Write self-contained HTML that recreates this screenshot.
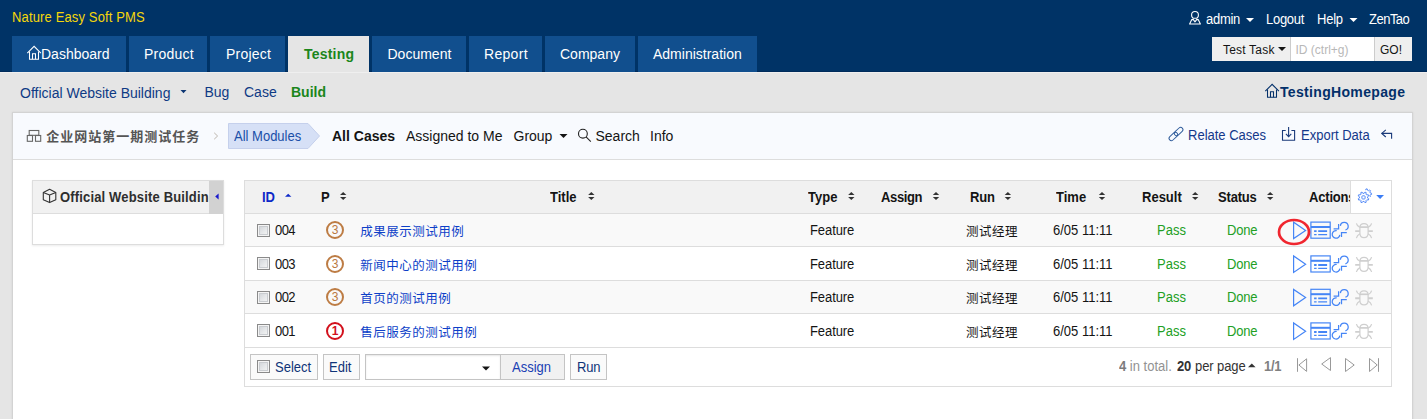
<!DOCTYPE html>
<html lang="en">
<head>
<meta charset="utf-8">
<title>Testing - Nature Easy Soft PMS</title>
<style>
*{box-sizing:border-box;margin:0;padding:0}
html,body{width:1427px;height:419px;overflow:hidden}
body{background:#e5e5e5;font-family:"Liberation Sans","Noto Sans CJK SC",sans-serif;font-size:13px;color:#141414;position:relative}
.a{position:absolute;white-space:nowrap}
.t{position:absolute;white-space:nowrap;line-height:16px;color:#141414}
.n{font-size:14px;transform:scaleX(.929);transform-origin:0 50%}
.m{font-size:14px}
.s{font-size:12px}
.b{font-weight:bold}
#header{position:absolute;left:0;top:0;width:1427px;height:72px;background:#003366}
.tab{position:absolute;top:36px;height:36px;background:#114f8e}
.tab.active{background:#e5e5e5}
#panel{position:absolute;left:12px;top:112px;width:1401px;height:320px;background:#fff;border:1px solid #d3d3d3;box-shadow:0 0 2px rgba(0,0,0,.08)}
#fbar{position:absolute;left:13px;top:113px;width:1399px;height:47px;background:#f8fafe;border-bottom:1px solid #ddd}
#side{position:absolute;left:32px;top:180px;width:192px;height:65px;background:#fff;border:1px solid #ddd;box-shadow:0 1px 2px rgba(0,0,0,.08)}
#sidehead{position:absolute;left:33px;top:181px;width:190px;height:33px;background:#f1f1f1;border-bottom:1px solid #ddd}
#tbl{position:absolute;left:244px;top:180px;width:1148px;height:207px;border:1px solid #ddd;background:#fff}
.rw{position:absolute;left:245px;width:1146px;border-bottom:1px solid #ddd}
.z{font-family:"Liberation Sans","Noto Sans CJK SC",sans-serif}
.cb{position:absolute;width:13px;height:13px;border:1px solid #8a8a8a;background:linear-gradient(135deg,#d3d6da 15%,#e6e8ea 55%,#f4f4f4 90%);box-shadow:inset 0 0 0 1px #f4f4f4,inset 0 0 0 2px #c9ccd0}
.pri{position:absolute;width:18px;height:18px;border-radius:50%;border:2px solid #bd7c44;color:#b9783f;font-size:12px;line-height:15.5px;text-align:center}
.pri.p1{border-color:#d2101c;color:#d2101c;font-weight:bold}
.btn{position:absolute;top:354px;height:26px;border:1px solid #c4c4c4;background:#fafafa;white-space:nowrap}
svg{position:absolute;left:0;top:0;overflow:visible;pointer-events:none}
</style>
</head>
<body>
<div id="header"></div><div class="a" style="left:0;top:71px;width:1427px;height:1px;background:#002b5b"></div><div class="a" style="left:0;top:72px;width:1427px;height:1px;background:#efefef"></div>
<div class="t n" id="t_company" style="left:12px;top:9px;color:#f5d60a;letter-spacing:0.15px;">Nature Easy Soft PMS</div>
<div class="tab" style="left:12px;width:114px"></div>
<div class="t m" id="t_Dashboard" style="left:41px;top:46px;color:#fff;">Dashboard</div>
<div class="tab" style="left:129px;width:78px"></div>
<div class="t m" id="t_Product" style="left:144px;top:46px;color:#fff;letter-spacing:0.25px;">Product</div>
<div class="tab" style="left:210px;width:75px"></div>
<div class="t m" id="t_Project" style="left:226px;top:46px;color:#fff;letter-spacing:0.2px;">Project</div>
<div class="tab active" style="left:288px;width:81px"></div>
<div class="t m b" id="t_Testing" style="left:304px;top:46px;color:#1b861b;letter-spacing:0.2px;">Testing</div>
<div class="tab" style="left:372px;width:94px"></div>
<div class="t m" id="t_Document" style="left:387.5px;top:46px;color:#fff;">Document</div>
<div class="tab" style="left:469px;width:73px"></div>
<div class="t m" id="t_Report" style="left:484px;top:46px;color:#fff;letter-spacing:0.3px;">Report</div>
<div class="tab" style="left:545px;width:90px"></div>
<div class="t m" id="t_Company" style="left:560px;top:46px;color:#fff;">Company</div>
<div class="tab" style="left:638px;width:119px"></div>
<div class="t m" id="t_Administration" style="left:653px;top:46px;color:#fff;">Administration</div>
<div class="t n" id="t_admin" style="left:1205.5px;top:11px;color:#fff;letter-spacing:-0.3px;">admin</div>
<div class="t n" id="t_Logout" style="left:1266px;top:11px;color:#fff;letter-spacing:-0.3px;">Logout</div>
<div class="t n" id="t_Help" style="left:1317px;top:11px;color:#fff;letter-spacing:-0.25px;">Help</div>
<div class="t n" id="t_ZenTao" style="left:1369px;top:11px;color:#fff;letter-spacing:-0.55px;">ZenTao</div>
<div class="a" style="left:1212px;top:37px;width:200px;height:24px;background:#fff"></div>
<div class="a" style="left:1212px;top:37px;width:79px;height:24px;background:#efefef;border-right:1px solid #ccc"></div>
<div class="a" style="left:1374px;top:37px;width:38px;height:24px;background:#efefef;border-left:1px solid #ccc"></div>
<div class="t s" id="t_TestTask" style="left:1223px;top:42px;letter-spacing:0.2px;">Test Task</div>
<div class="t s" id="t_idctrl" style="left:1295.5px;top:42px;color:#b8b8b8;">ID (ctrl+g)</div>
<div class="t s" id="t_GO" style="left:1380px;top:42px;">GO!</div>
<div class="t m" id="t_owb" style="left:20px;top:85px;color:#0e3a84;">Official Website Building</div>
<div class="t m" id="t_Bug" style="left:204.5px;top:84px;color:#0e3a84;">Bug</div>
<div class="t m" id="t_Case" style="left:244px;top:84px;color:#0e3a84;">Case</div>
<div class="t m b" id="t_Build" style="left:291px;top:84px;color:#1b861b;">Build</div>
<div class="t m b" id="t_TH" style="left:1280px;top:84px;color:#03306a;letter-spacing:0.33px;">TestingHomepage</div>
<div id="panel"></div><div id="fbar"></div>
<svg width="1427" height="419" viewBox="0 0 1427 419"><polygon points="228.5,123.5 308,123.5 319.5,136 308,148.5 228.5,148.5" fill="#d6e0f6" stroke="#c5d0ec" stroke-width="1"/></svg>
<div class="t z b z" id="t_task" style="left:46.3px;top:129px;color:#555;letter-spacing:1px;font-size:13px;">企业网站第一期测试任务</div>
<div class="t n" id="t_AllModules" style="left:234px;top:128px;color:#1a4fa8;">All Modules</div>
<div class="t m b" id="t_AllCases" style="left:332px;top:128px;">All Cases</div>
<div class="t m" id="t_Assigned" style="left:406px;top:128px;">Assigned to Me</div>
<div class="t m" id="t_Group" style="left:513.5px;top:128px;">Group</div>
<div class="t m" id="t_Search" style="left:595.5px;top:128px;">Search</div>
<div class="t m" id="t_Info" style="left:650px;top:128px;">Info</div>
<div class="t n" id="t_Relate" style="left:1188.4px;top:127px;color:#14388a;">Relate Cases</div>
<div class="t n" id="t_Export" style="left:1300.5px;top:127px;color:#14388a;">Export Data</div>
<div id="side"></div><div id="sidehead"></div>
<div class="t n b" id="t_sideT" style="left:60px;top:189px;color:#2e2e2e;letter-spacing:0.17px;width:160px;overflow:hidden;">Official Website Building</div>
<div class="a" style="left:209px;top:181px;width:14px;height:33px;background:#d2d2d2"></div>
<div id="tbl"></div>
<div class="rw" style="top:181px;height:33px;background:#f1f1f1"></div>
<div class="t n b" id="h_ID" style="left:261.5px;top:189px;color:#0d28c8;">ID</div>
<div class="t n b" id="h_P" style="left:320.5px;top:189px;">P</div>
<div class="t n b" id="h_Title" style="left:549.5px;top:189px;">Title</div>
<div class="t n b" id="h_Type" style="left:808px;top:189px;">Type</div>
<div class="t n b" id="h_Assign" style="left:881px;top:189px;letter-spacing:-0.4px;">Assign</div>
<div class="t n b" id="h_Run" style="left:969.5px;top:189px;letter-spacing:-0.2px;">Run</div>
<div class="t n b" id="h_Time" style="left:1056.3px;top:189px;">Time</div>
<div class="t n b" id="h_Result" style="left:1142.4px;top:189px;">Result</div>
<div class="t n b" id="h_Status" style="left:1218.4px;top:189px;letter-spacing:-0.2px;">Status</div>
<div class="t n b" id="h_Actions" style="left:1309px;top:189px;letter-spacing:-0.2px;">Actions</div>
<div class="a" style="left:1350px;top:181px;width:41px;height:32px;background:#fff;border-left:1px solid #ddd"></div>
<div class="rw" style="top:214px;height:33px;background:#f9f9f9;"></div>
<div class="cb" style="left:257px;top:224px"></div>
<div class="t n" id="r0_id" style="left:274.5px;top:222px;letter-spacing:-0.6px;">004</div>
<div class="pri" style="left:326px;top:221px">3</div>
<div class="t z z" id="r0_t" style="left:360.3px;top:224px;color:#0d3fc8;letter-spacing:0.5px;font-size:12.5px;">成果展示测试用例</div>
<div class="t n" id="r0_f" style="left:810px;top:222px;letter-spacing:-0.1px;">Feature</div>
<div class="t z z" id="r0_r" style="left:966px;top:224px;letter-spacing:0.5px;font-size:12.5px;">测试经理</div>
<div class="t n" id="r0_tm" style="left:1053px;top:222px;">6/05 11:11</div>
<div class="t n" id="r0_p" style="left:1157px;top:222px;color:#229f24;">Pass</div>
<div class="t n" id="r0_d" style="left:1227px;top:222px;color:#229f24;letter-spacing:-0.2px;">Done</div>
<div class="rw" style="top:247px;height:34px;"></div>
<div class="cb" style="left:257px;top:257px"></div>
<div class="t n" id="r1_id" style="left:274.5px;top:256px;letter-spacing:-0.6px;">003</div>
<div class="pri" style="left:326px;top:255px">3</div>
<div class="t z z" id="r1_t" style="left:360.3px;top:258px;color:#0d3fc8;letter-spacing:0.5px;font-size:12.5px;">新闻中心的测试用例</div>
<div class="t n" id="r1_f" style="left:810px;top:256px;letter-spacing:-0.1px;">Feature</div>
<div class="t z z" id="r1_r" style="left:966px;top:258px;letter-spacing:0.5px;font-size:12.5px;">测试经理</div>
<div class="t n" id="r1_tm" style="left:1053px;top:256px;">6/05 11:11</div>
<div class="t n" id="r1_p" style="left:1157px;top:256px;color:#229f24;">Pass</div>
<div class="t n" id="r1_d" style="left:1227px;top:256px;color:#229f24;letter-spacing:-0.2px;">Done</div>
<div class="rw" style="top:281px;height:33px;background:#f9f9f9;"></div>
<div class="cb" style="left:257px;top:291px"></div>
<div class="t n" id="r2_id" style="left:274.5px;top:289px;letter-spacing:-0.6px;">002</div>
<div class="pri" style="left:326px;top:288px">3</div>
<div class="t z z" id="r2_t" style="left:360.3px;top:291px;color:#0d3fc8;letter-spacing:0.5px;font-size:12.5px;">首页的测试用例</div>
<div class="t n" id="r2_f" style="left:810px;top:289px;letter-spacing:-0.1px;">Feature</div>
<div class="t z z" id="r2_r" style="left:966px;top:291px;letter-spacing:0.5px;font-size:12.5px;">测试经理</div>
<div class="t n" id="r2_tm" style="left:1053px;top:289px;">6/05 11:11</div>
<div class="t n" id="r2_p" style="left:1157px;top:289px;color:#229f24;">Pass</div>
<div class="t n" id="r2_d" style="left:1227px;top:289px;color:#229f24;letter-spacing:-0.2px;">Done</div>
<div class="rw" style="top:314px;height:34px;"></div>
<div class="cb" style="left:257px;top:324px"></div>
<div class="t n" id="r3_id" style="left:274.5px;top:323px;letter-spacing:-0.6px;">001</div>
<div class="pri p1" style="left:326px;top:322px">1</div>
<div class="t z z" id="r3_t" style="left:360.3px;top:325px;color:#0d3fc8;letter-spacing:0.5px;font-size:12.5px;">售后服务的测试用例</div>
<div class="t n" id="r3_f" style="left:810px;top:323px;letter-spacing:-0.1px;">Feature</div>
<div class="t z z" id="r3_r" style="left:966px;top:325px;letter-spacing:0.5px;font-size:12.5px;">测试经理</div>
<div class="t n" id="r3_tm" style="left:1053px;top:323px;">6/05 11:11</div>
<div class="t n" id="r3_p" style="left:1157px;top:323px;color:#229f24;">Pass</div>
<div class="t n" id="r3_d" style="left:1227px;top:323px;color:#229f24;letter-spacing:-0.2px;">Done</div>
<div class="btn" style="left:250px;width:68px"></div>
<div class="cb" style="left:257px;top:360px"></div>
<div class="t n" id="t_Select" style="left:274.5px;top:359px;color:#0f3478;">Select</div>
<div class="btn" style="left:323px;width:37px"></div>
<div class="t n" id="t_Edit" style="left:329px;top:359px;color:#0f3478;">Edit</div>
<div class="btn" style="left:365px;width:136px;background:#fff;box-shadow:inset 0 1px 2px rgba(0,0,0,.1)"></div>
<div class="btn" style="left:500px;width:65px;background:#f1f1f1"></div>
<div class="t n" id="t_Assign" style="left:512.4px;top:359px;color:#1a3fb4;">Assign</div>
<div class="btn" style="left:570px;width:37px"></div>
<div class="t n" id="t_Run" style="left:577px;top:359px;color:#0f3478;letter-spacing:-0.15px;">Run</div>
<div class="t n" id="t_total" style="left:1119px;top:358px;color:#929292;"><b style="color:#7c7c7c">4</b> in total.</div>
<div class="t n b" id="t_20" style="left:1177.4px;top:358px;color:#333;letter-spacing:-0.2px;">20</div>
<div class="t n" id="t_pp" style="left:1195.3px;top:358px;color:#333;letter-spacing:-0.1px;">per page</div>
<div class="t n b" id="t_11" style="left:1264.4px;top:358px;color:#808080;letter-spacing:-0.3px;">1/1</div>
<svg width="1427" height="419" viewBox="0 0 1427 419" fill="none" stroke-linecap="butt" stroke-linejoin="miter">
<g stroke="#fff" stroke-width="1.1"><circle cx="1195" cy="14.9" r="3.4"/><path d="M1189.6 24 L1191.8 19.6 L1193.2 19.4 L1195 21.8 L1196.8 19.4 L1198.2 19.6 L1200.4 24 Z" stroke-linejoin="round"/></g>
<polygon points="1246,18 1254,18 1250,22" fill="#fff" stroke="none"/>
<polygon points="1349.5,18 1357.5,18 1353.5,22" fill="#fff" stroke="none"/>
<polygon points="1278,47 1286,47 1282,51" fill="#141414" stroke="none"/>
<polygon points="180.5,90 186.5,90 183.5,93.3" fill="#0c3673" stroke="none"/>
<polygon points="559.5,134 567.5,134 563.5,138" fill="#141414" stroke="none"/>
<polygon points="482,366.5 490,366.5 486,370.5" fill="#141414" stroke="none"/>
<polygon points="1248,367.2 1255.6,367.2 1251.8,363.4" fill="#333" stroke="none"/>
<polygon points="1376.2,195 1384,195 1380.1,199" fill="#3b7df5" stroke="none"/>
<polygon points="218.6,193.4 218.6,199.6 215.2,196.5" fill="#1a1acd" stroke="none"/>
<g stroke="#fff" stroke-width="1.05" transform="translate(27,45.8)"><path d="M0.3 7.3 L7.1 0.5 L13.9 7.3"/><path d="M2.5 5.6 V13.5 H11.5 V5.6"/><path d="M5.5 13.5 V7.9 H8.5 V13.5"/></g>
<g stroke="#03306a" stroke-width="1.05" transform="translate(1265,83.8)"><path d="M0.3 7.3 L7.1 0.5 L13.9 7.3"/><path d="M2.5 5.6 V13.5 H11.5 V5.6"/><path d="M5.5 13.5 V7.9 H8.5 V13.5"/></g>
<g stroke="#666" stroke-width="1.1"><rect x="29.2" y="130.5" width="9.6" height="4.8"/><rect x="27.3" y="135.5" width="5.2" height="5.8"/><rect x="35.5" y="135.5" width="5.2" height="5.8"/></g>
<polyline points="214.2,132.8 217.6,136 214.2,139.2" stroke="#bdb6ae" stroke-width="1"/>
<g stroke="#222" stroke-width="1.1"><circle cx="582.9" cy="133.7" r="4.4"/><path d="M586.1 136.9 L590.8 141.6"/></g>
<g stroke="#2d5a9a" stroke-width="0.95" transform="translate(1176,134) rotate(-43)"><rect x="-8.6" y="-2.3" width="10" height="4.6" rx="2.3"/><rect x="-1.4" y="-2.3" width="10" height="4.6" rx="2.3"/></g>
<g stroke="#1a3a7a" stroke-width="1.1"><path d="M1285.7 130.5 H1282.5 V140.2 H1294.6 V130.5 H1291.4"/><path d="M1288.6 127 V136.6"/><path d="M1285.9 133.9 L1288.6 136.6 L1291.3 133.9"/></g>
<g stroke="#1a3a7a" stroke-width="1.1"><path d="M1381.6 133.4 H1391.6 V138.8"/><path d="M1385.8 129.9 L1381.8 133.4 L1385.8 137"/></g>
<g stroke="#333" stroke-width="1.1" stroke-linejoin="round"><path d="M49.6 189.2 L55.8 192.4 V199.7 L49.6 202.6 L43.3 199.7 V192.4 Z"/><path d="M43.3 192.4 L49.6 194.9 L55.8 192.4 M49.6 194.9 V202.6"/></g>
<g stroke="#4d86f7" stroke-width="0.95" stroke-linejoin="round"><path d="M1367.55 198.04 L1368.81 198.85 L1368.28 200.13 L1366.82 199.81 L1365.91 200.72 L1366.23 202.18 L1364.95 202.71 L1364.14 201.45 L1362.86 201.45 L1362.05 202.71 L1360.77 202.18 L1361.09 200.72 L1360.18 199.81 L1358.72 200.13 L1358.19 198.85 L1359.45 198.04 L1359.45 196.76 L1358.19 195.95 L1358.72 194.67 L1360.18 194.99 L1361.09 194.08 L1360.77 192.62 L1362.05 192.09 L1362.86 193.35 L1364.14 193.35 L1364.95 192.09 L1366.23 192.62 L1365.91 194.08 L1366.82 194.99 L1368.28 194.67 L1368.81 195.95 L1367.55 196.76 Z"/><rect x="1361.9" y="195.8" width="3.2" height="3.2" rx="0.8"/>
<path d="M1365.71 190.20 L1365.97 188.94 L1367.23 188.94 L1367.49 190.20 L1368.59 190.66 L1369.66 189.95 L1370.55 190.84 L1369.84 191.91 L1370.30 193.01 L1371.56 193.27 L1371.56 194.53 L1370.30 194.79 L1369.84 195.89 L1370.55 196.96"/></g>
<polygon points="340.0,195 346.4,195 343.2,192" fill="#333" stroke="none"/>
<polygon points="340.0,197 346.4,197 343.2,200" fill="#333" stroke="none"/>
<polygon points="588.0999999999999,195 594.5,195 591.3,192" fill="#333" stroke="none"/>
<polygon points="588.0999999999999,197 594.5,197 591.3,200" fill="#333" stroke="none"/>
<polygon points="848.0999999999999,195 854.5,195 851.3,192" fill="#333" stroke="none"/>
<polygon points="848.0999999999999,197 854.5,197 851.3,200" fill="#333" stroke="none"/>
<polygon points="932.8,195 939.2,195 936,192" fill="#333" stroke="none"/>
<polygon points="932.8,197 939.2,197 936,200" fill="#333" stroke="none"/>
<polygon points="1004.6999999999999,195 1011.1,195 1007.9,192" fill="#333" stroke="none"/>
<polygon points="1004.6999999999999,197 1011.1,197 1007.9,200" fill="#333" stroke="none"/>
<polygon points="1098.8,195 1105.2,195 1102,192" fill="#333" stroke="none"/>
<polygon points="1098.8,197 1105.2,197 1102,200" fill="#333" stroke="none"/>
<polygon points="1192.0,195 1198.4,195 1195.2,192" fill="#333" stroke="none"/>
<polygon points="1192.0,197 1198.4,197 1195.2,200" fill="#333" stroke="none"/>
<polygon points="1267.0,195 1273.4,195 1270.2,192" fill="#333" stroke="none"/>
<polygon points="1267.0,197 1273.4,197 1270.2,200" fill="#333" stroke="none"/>
<polygon points="285,196.8 291.4,196.8 288.2,193.8" fill="#0d28c8" stroke="none"/>
<g stroke="#999" stroke-width="1"><path d="M1297.5 358.2 V371.8"/><path d="M1306.6 358.8 V371.4 L1298.9 365 Z"/><path d="M1330.5 357.6 V370.5 L1321.7 364 Z"/><path d="M1345.5 358.5 V371.5 L1354.2 365 Z"/><path d="M1369.5 358.5 V371.5 L1377.2 365 Z"/><path d="M1378.5 358.2 V371.8"/></g>
<g transform="translate(0,0.19999999999998863)"><path d="M1293.6 222 V238.4 L1305.6 230.2 Z" stroke="#4585f6" stroke-width="1.2"/><g stroke="#4585f6"><rect x="1310.9" y="221.9" width="19.3" height="16.1" stroke-width="1.2"/><path d="M1310.9 226.8 H1330.2" stroke-width="2"/><path d="M1314.1 231 H1316.6 M1318.2 231 H1327.1" stroke-width="1.8"/><path d="M1314.1 234.4 H1316.6 M1318.2 234.4 H1327.1" stroke-width="1.2"/></g><g stroke="#4585f6" stroke-width="1.25"><path d="M1340.4 225.7 A3.9 3.9 0 1 1 1345.4 229.8"/><path d="M1338.6 223.9 V228.6 H1333.6"/><path d="M1346.8 232.3 H1341.5 V236.8"/><path d="M1336.7 230.5 A3.8 3.8 0 1 0 1339.8 234.7"/></g><g stroke="#cfcfcf" stroke-width="1.2"><path d="M1359.9 227.4 Q1359.9 223.4 1364 223.4 Q1368.1 223.4 1368.1 227.4 V233 Q1368.1 237.4 1364 237.4 Q1359.9 237.4 1359.9 233 Z"/><path d="M1359.9 226.9 H1368.1" stroke-width="1.7"/><path d="M1355.2 230.9 H1359.9 M1368.1 230.9 H1372.8" stroke-width="1.9"/><path d="M1356.4 223.2 Q1357 226 1359.9 227.2 M1371.6 223.2 Q1371 226 1368.1 227.2 M1356.4 238 Q1357 235 1359.9 233.6 M1371.6 238 Q1371 235 1368.1 233.6"/></g></g>
<g transform="translate(0,34)"><path d="M1293.6 222 V238.4 L1305.6 230.2 Z" stroke="#4585f6" stroke-width="1.2"/><g stroke="#4585f6"><rect x="1310.9" y="221.9" width="19.3" height="16.1" stroke-width="1.2"/><path d="M1310.9 226.8 H1330.2" stroke-width="2"/><path d="M1314.1 231 H1316.6 M1318.2 231 H1327.1" stroke-width="1.8"/><path d="M1314.1 234.4 H1316.6 M1318.2 234.4 H1327.1" stroke-width="1.2"/></g><g stroke="#4585f6" stroke-width="1.25"><path d="M1340.4 225.7 A3.9 3.9 0 1 1 1345.4 229.8"/><path d="M1338.6 223.9 V228.6 H1333.6"/><path d="M1346.8 232.3 H1341.5 V236.8"/><path d="M1336.7 230.5 A3.8 3.8 0 1 0 1339.8 234.7"/></g><g stroke="#cfcfcf" stroke-width="1.2"><path d="M1359.9 227.4 Q1359.9 223.4 1364 223.4 Q1368.1 223.4 1368.1 227.4 V233 Q1368.1 237.4 1364 237.4 Q1359.9 237.4 1359.9 233 Z"/><path d="M1359.9 226.9 H1368.1" stroke-width="1.7"/><path d="M1355.2 230.9 H1359.9 M1368.1 230.9 H1372.8" stroke-width="1.9"/><path d="M1356.4 223.2 Q1357 226 1359.9 227.2 M1371.6 223.2 Q1371 226 1368.1 227.2 M1356.4 238 Q1357 235 1359.9 233.6 M1371.6 238 Q1371 235 1368.1 233.6"/></g></g>
<g transform="translate(0,67.39999999999998)"><path d="M1293.6 222 V238.4 L1305.6 230.2 Z" stroke="#4585f6" stroke-width="1.2"/><g stroke="#4585f6"><rect x="1310.9" y="221.9" width="19.3" height="16.1" stroke-width="1.2"/><path d="M1310.9 226.8 H1330.2" stroke-width="2"/><path d="M1314.1 231 H1316.6 M1318.2 231 H1327.1" stroke-width="1.8"/><path d="M1314.1 234.4 H1316.6 M1318.2 234.4 H1327.1" stroke-width="1.2"/></g><g stroke="#4585f6" stroke-width="1.25"><path d="M1340.4 225.7 A3.9 3.9 0 1 1 1345.4 229.8"/><path d="M1338.6 223.9 V228.6 H1333.6"/><path d="M1346.8 232.3 H1341.5 V236.8"/><path d="M1336.7 230.5 A3.8 3.8 0 1 0 1339.8 234.7"/></g><g stroke="#cfcfcf" stroke-width="1.2"><path d="M1359.9 227.4 Q1359.9 223.4 1364 223.4 Q1368.1 223.4 1368.1 227.4 V233 Q1368.1 237.4 1364 237.4 Q1359.9 237.4 1359.9 233 Z"/><path d="M1359.9 226.9 H1368.1" stroke-width="1.7"/><path d="M1355.2 230.9 H1359.9 M1368.1 230.9 H1372.8" stroke-width="1.9"/><path d="M1356.4 223.2 Q1357 226 1359.9 227.2 M1371.6 223.2 Q1371 226 1368.1 227.2 M1356.4 238 Q1357 235 1359.9 233.6 M1371.6 238 Q1371 235 1368.1 233.6"/></g></g>
<g transform="translate(0,101)"><path d="M1293.6 222 V238.4 L1305.6 230.2 Z" stroke="#4585f6" stroke-width="1.2"/><g stroke="#4585f6"><rect x="1310.9" y="221.9" width="19.3" height="16.1" stroke-width="1.2"/><path d="M1310.9 226.8 H1330.2" stroke-width="2"/><path d="M1314.1 231 H1316.6 M1318.2 231 H1327.1" stroke-width="1.8"/><path d="M1314.1 234.4 H1316.6 M1318.2 234.4 H1327.1" stroke-width="1.2"/></g><g stroke="#4585f6" stroke-width="1.25"><path d="M1340.4 225.7 A3.9 3.9 0 1 1 1345.4 229.8"/><path d="M1338.6 223.9 V228.6 H1333.6"/><path d="M1346.8 232.3 H1341.5 V236.8"/><path d="M1336.7 230.5 A3.8 3.8 0 1 0 1339.8 234.7"/></g><g stroke="#cfcfcf" stroke-width="1.2"><path d="M1359.9 227.4 Q1359.9 223.4 1364 223.4 Q1368.1 223.4 1368.1 227.4 V233 Q1368.1 237.4 1364 237.4 Q1359.9 237.4 1359.9 233 Z"/><path d="M1359.9 226.9 H1368.1" stroke-width="1.7"/><path d="M1355.2 230.9 H1359.9 M1368.1 230.9 H1372.8" stroke-width="1.9"/><path d="M1356.4 223.2 Q1357 226 1359.9 227.2 M1371.6 223.2 Q1371 226 1368.1 227.2 M1356.4 238 Q1357 235 1359.9 233.6 M1371.6 238 Q1371 235 1368.1 233.6"/></g></g>
<ellipse cx="1294" cy="232" rx="15" ry="12" stroke="#f0262f" stroke-width="2.7"/>
</svg>
</body>
</html>
